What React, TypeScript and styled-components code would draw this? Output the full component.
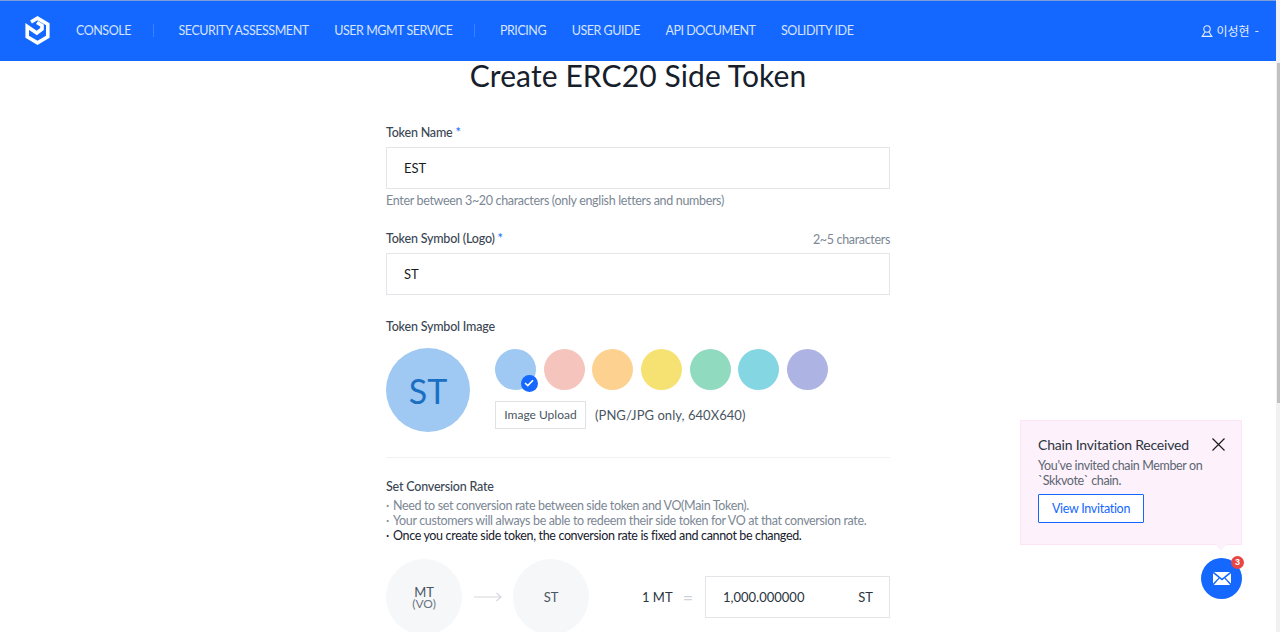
import React from 'react';
import styled, { createGlobalStyle } from 'styled-components';

const colors = ['#9fc9f2', '#f5c4bd', '#fdd190', '#f6e273', '#90dac0', '#84d6e2', '#adb3e2'];

const navLeft = ['CONSOLE'];
const navMiddle = ['SECURITY ASSESSMENT', 'USER MGMT SERVICE'];
const navRight = ['PRICING', 'USER GUIDE', 'API DOCUMENT', 'SOLIDITY IDE'];

const App: React.FC = () => {
  return (
    <Page>
      <GlobalStyle />
      <Main>
        <Header>
          <Logo viewBox="0 0 25 29" fill="none" stroke="#fff" strokeWidth="3.6" strokeLinejoin="miter">
            <path d="M6 6 L12.5 2.2 L22.8 8.2 V20.8 L12.5 26.8 L2.2 20.8 V10.5 L11.8 17 L17 13 V9.5 L12 6.5" />
          </Logo>
          <NavItem>{navLeft[0]}</NavItem>
          <NavDivider />
          {navMiddle.map((item) => (
            <NavItem key={item}>{item}</NavItem>
          ))}
          <NavDivider />
          {navRight.map((item) => (
            <NavItem key={item}>{item}</NavItem>
          ))}
          <UserMenu>
            <svg width="12" height="12" viewBox="0 0 12 12" fill="none" stroke="#e6efff" strokeWidth="1.1">
              <circle cx="6" cy="4" r="3.2" />
              <path d="M4 7 L1.2 11.4 H10.8 L8 7" />
            </svg>
            <UserName>이성현</UserName>
            <span>-</span>
          </UserMenu>
        </Header>

        <Title>Create ERC20 Side Token</Title>

        <Form>
          <LabelRow>
            <Label>
              Token Name <Star>*</Star>
            </Label>
          </LabelRow>
          <Input>EST</Input>
          <Hint>Enter between 3~20 characters (only english letters and numbers)</Hint>

          <LabelRow $top={22}>
            <Label>
              Token Symbol (Logo) <Star>*</Star>
            </Label>
            <Counter>2~5 characters</Counter>
          </LabelRow>
          <Input>ST</Input>

          <LabelRow $top={24}>
            <Label>Token Symbol Image</Label>
          </LabelRow>
          <ImageRow>
            <Preview>ST</Preview>
            <ImageOptions>
              <Swatches>
                {colors.map((color, i) => (
                  <Swatch key={color} $color={color}>
                    {i === 0 && (
                      <CheckBadge>
                        <svg width="10" height="8" viewBox="0 0 10 8" fill="none" stroke="#fff" strokeWidth="1.6">
                          <path d="M1 4 L3.8 6.6 L9 1.2" />
                        </svg>
                      </CheckBadge>
                    )}
                  </Swatch>
                ))}
              </Swatches>
              <UploadRow>
                <UploadButton>Image Upload</UploadButton>
                <UploadNote>(PNG/JPG only, 640X640)</UploadNote>
              </UploadRow>
            </ImageOptions>
          </ImageRow>

          <Separator />

          <Label>Set Conversion Rate</Label>
          <Notes>
            <li>Need to set conversion rate between side token and VO(Main Token).</li>
            <li>Your customers will always be able to redeem their side token for VO at that conversion rate.</li>
            <Strong>Once you create side token, the conversion rate is fixed and cannot be changed.</Strong>
          </Notes>

          <RateRow>
            <TokenCircle>
              MT
              <small>(VO)</small>
            </TokenCircle>
            <svg width="28" height="10" viewBox="0 0 28 10" fill="none" stroke="#d5d8dc" strokeWidth="1.2">
              <path d="M0 5 H27 M22.5 1 L27 5 L22.5 9" />
            </svg>
            <TokenCircle>ST</TokenCircle>
            <RateLabel>1 MT</RateLabel>
            <Equals>=</Equals>
            <RateInput>
              <span>1,000.000000</span>
              <span>ST</span>
            </RateInput>
          </RateRow>
        </Form>

        <Popup>
          <PopupHead>
            <PopupTitle>Chain Invitation Received</PopupTitle>
            <svg width="13" height="13" viewBox="0 0 13 13" fill="none" stroke="#1c1c1c" strokeWidth="1.2">
              <path d="M0.5 0.5 L12.5 12.5 M12.5 0.5 L0.5 12.5" />
            </svg>
          </PopupHead>
          <PopupText>
            You've invited chain Member on
            <br />
            `Skkvote` chain.
          </PopupText>
          <ViewButton>View Invitation</ViewButton>
        </Popup>
        <MailButton>
          <svg width="18" height="13" viewBox="0 0 18 13">
            <path d="M1 0 H17 L9 6.6 Z" fill="#fff" />
            <path d="M0 1.2 L5.6 5.8 L0 11.4 Z M18 1.2 L12.4 5.8 L18 11.4 Z" fill="#fff" />
            <path d="M6.5 6.6 L9 8.6 L11.5 6.6 L17.2 13 H0.8 Z" fill="#fff" />
          </svg>
          <Badge>3</Badge>
        </MailButton>
      </Main>
      <Scrollbar>
        <ScrollThumb />
      </Scrollbar>
    </Page>
  );
};

const GlobalStyle = createGlobalStyle`
  html, body {
    margin: 0;
    height: 632px;
    overflow: hidden;
    background: #fff;
    font-family: Lato, "Noto Sans CJK KR", sans-serif;
  }
`;

const Page = styled.div`
  display: flex;
  height: 632px;
  overflow: hidden;
`;

const Main = styled.div`
  position: relative;
  flex: 1;
  min-width: 0;
`;

const Scrollbar = styled.div`
  width: 4px;
  padding-top: 63px;
  box-sizing: border-box;
  background: #f1f1f1;
`;

const ScrollThumb = styled.div`
  height: 340px;
  margin-left: 1px;
  background: #c1c1c1;
`;

const Header = styled.header`
  display: flex;
  align-items: center;
  box-sizing: border-box;
  height: 61px;
  padding: 0 17px 1px 25px;
  background: #1467ff;
  border-top: 1px solid #7d9fd6;
`;

const Logo = styled.svg`
  width: 25px;
  height: 29px;
  margin-right: 26px;
`;

const NavItem = styled.a`
  margin-right: 25.5px;
  font-size: 12.5px;
  letter-spacing: -0.45px;
  color: #d5e4ff;
  white-space: nowrap;
`;

const NavDivider = styled.span`
  width: 1px;
  height: 13px;
  margin-right: 25px;
  margin-left: -4px;
  background: #3b80ff;
`;

const UserMenu = styled.div`
  display: flex;
  align-items: center;
  gap: 3px;
  margin-left: auto;
  font-size: 12px;
  color: #e6efff;
`;

const UserName = styled.span`
  margin-right: 2px;
`;

const Title = styled.h1`
  margin: 0;
  font-size: 30px;
  font-weight: 400;
  line-height: 28px;
  letter-spacing: 0.1px;
  text-align: center;
  color: #16202c;
`;

const Form = styled.div`
  width: 504px;
  margin: 36px auto 0 386px;
`;

const LabelRow = styled.div<{ $top?: number }>`
  display: flex;
  align-items: center;
  justify-content: space-between;
  height: 16px;
  margin-top: ${(props) => props.$top ?? 0}px;
  margin-bottom: 6px;
`;

const Label = styled.div`
  font-size: 12.5px;
  font-weight: 500;
  line-height: 16px;
  letter-spacing: -0.2px;
  color: #3a4654;
`;

const Star = styled.span`
  color: #1467ff;
`;

const Input = styled.div`
  display: flex;
  align-items: center;
  box-sizing: border-box;
  height: 42px;
  padding-left: 17px;
  border: 1px solid #e3e5e8;
  font-size: 13px;
  color: #1a1a1a;
`;

const Hint = styled.div`
  margin-top: 4px;
  font-size: 12.5px;
  line-height: 16px;
  letter-spacing: -0.33px;
  color: #7c8794;
`;

const Counter = styled.span`
  font-size: 12.5px;
  letter-spacing: -0.33px;
  color: #7c8794;
`;

const ImageRow = styled.div`
  display: flex;
  gap: 25px;
  margin-top: 13px;
`;

const Preview = styled.div`
  display: flex;
  align-items: center;
  justify-content: center;
  width: 84px;
  height: 84px;
  border-radius: 50%;
  background: #9fc9f2;
  font-size: 34px;
  color: #1b6fc2;
`;

const ImageOptions = styled.div`
  display: flex;
  flex-direction: column;
  padding-top: 1px;
`;

const Swatches = styled.div`
  display: flex;
  gap: 7.67px;
`;

const Swatch = styled.div<{ $color: string }>`
  position: relative;
  width: 41px;
  height: 41px;
  border-radius: 50%;
  background: ${(props) => props.$color};
`;

const CheckBadge = styled.span`
  position: absolute;
  right: -1.5px;
  bottom: -1.5px;
  display: flex;
  align-items: center;
  justify-content: center;
  width: 17px;
  height: 17px;
  border-radius: 50%;
  background: #1467ff;
`;

const UploadRow = styled.div`
  display: flex;
  align-items: center;
  gap: 9px;
  margin-top: 11px;
`;

const UploadButton = styled.div`
  box-sizing: border-box;
  width: 91px;
  height: 28px;
  border: 1px solid #dfe1e4;
  font-size: 12px;
  line-height: 26px;
  text-align: center;
  color: #4a5561;
`;

const UploadNote = styled.div`
  font-size: 13px;
  letter-spacing: 0.05px;
  color: #4a5561;
`;

const Separator = styled.div`
  height: 1px;
  margin: 25px 0 21px;
  background: #f0f1f3;
`;

const Notes = styled.ul`
  margin: 3px 0 0;
  padding: 0;
  list-style: none;
  font-size: 12.5px;
  line-height: 15px;
  letter-spacing: -0.35px;
  color: #7c8794;

  li::before {
    content: '·';
    display: inline-block;
    width: 7px;
  }
`;

const Strong = styled.li`
  color: #16202c;
`;

const RateRow = styled.div`
  display: flex;
  align-items: center;
  margin-top: 16px;

  svg {
    margin: 0 11px 0 12px;
  }
`;

const TokenCircle = styled.div`
  display: flex;
  flex-direction: column;
  align-items: center;
  justify-content: center;
  flex: none;
  width: 76px;
  height: 76px;
  border-radius: 50%;
  background: #f6f7f9;
  font-size: 13px;
  line-height: 12px;
  color: #4a5561;

  small {
    font-size: 12px;
    line-height: 11px;
    color: #6a7480;
  }
`;

const RateLabel = styled.div`
  margin-left: 53px;
  font-size: 13px;
  white-space: nowrap;
  color: #2a3440;
`;

const Equals = styled.div`
  margin: 0 11px 0 10px;
  font-size: 18px;
  color: #cfd3d8;
`;

const RateInput = styled.div`
  display: flex;
  align-items: center;
  justify-content: space-between;
  flex: none;
  box-sizing: border-box;
  width: 185px;
  height: 42px;
  margin-left: auto;
  padding: 0 16px 0 17px;
  border: 1px solid #e3e5e8;
  font-size: 13px;
  color: #2a3440;
`;

const Popup = styled.div`
  position: absolute;
  left: 1020px;
  top: 420px;
  box-sizing: border-box;
  width: 222px;
  height: 125px;
  padding: 16px 17px;
  background: #fdf1fb;
  border: 1px solid #fde5f7;

  &::after {
    content: '';
    position: absolute;
    left: 196px;
    bottom: -5px;
    width: 8px;
    height: 8px;
    background: #fdf1fb;
    transform: rotate(45deg);
  }
`;

const PopupHead = styled.div`
  display: flex;
  align-items: center;
  justify-content: space-between;
  margin-right: -1px;

  svg {
    margin-top: -2px;
  }
`;

const PopupTitle = styled.div`
  font-size: 14px;
  line-height: 16px;
  letter-spacing: -0.2px;
  color: #2a3440;
`;

const PopupText = styled.div`
  margin-top: 5px;
  font-size: 12.5px;
  line-height: 15px;
  letter-spacing: -0.37px;
  color: #5b6672;
`;

const ViewButton = styled.button`
  display: block;
  box-sizing: border-box;
  width: 106px;
  height: 29px;
  margin-top: 6px;
  padding: 0;
  background: #fff;
  border: 1px solid #1467ff;
  border-radius: 1px;
  font-family: inherit;
  font-size: 12.5px;
  letter-spacing: -0.3px;
  color: #1467ff;
`;

const MailButton = styled.div`
  position: absolute;
  left: 1201px;
  top: 558px;
  display: flex;
  align-items: center;
  justify-content: center;
  width: 41px;
  height: 41px;
  border-radius: 50%;
  background: #1467ff;
`;

const Badge = styled.span`
  position: absolute;
  right: -2px;
  top: -2px;
  width: 13px;
  height: 13px;
  border-radius: 50%;
  background: #e84545;
  font-family: "Liberation Sans", sans-serif;
  font-size: 9px;
  font-weight: 700;
  line-height: 13px;
  text-align: center;
  color: #fff;
`;

export default App;
